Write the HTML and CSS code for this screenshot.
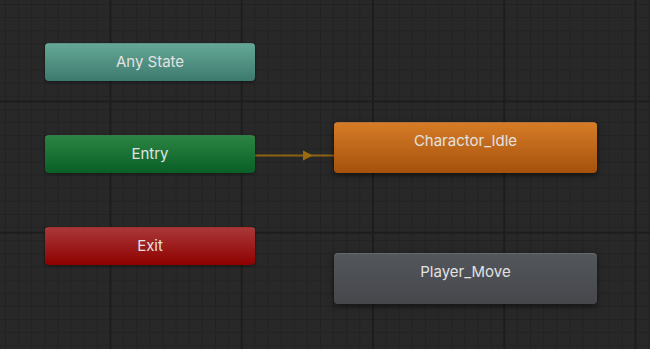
FILE: index.html
```html
<!DOCTYPE html>
<html lang="en">
<head>
    <meta charset="UTF-8">
    <title>Animator</title>
    <link rel="stylesheet" href="styles.css">
</head>
<body>
    <div class="graph">
        <!-- transitions -->
        <svg class="links" width="650" height="349" viewBox="0 0 650 349">
            <line x1="255" y1="155.5" x2="334" y2="155.5" stroke="#8e6212" stroke-width="2"/>
            <polygon points="303,150.5 313,155.5 303,160.5" fill="#9b6a12"/>
        </svg>

        <!-- states -->
        <div class="node node-any" style="left:45px; top:43px;">Any State</div>
        <div class="node node-entry" style="left:45px; top:135px;">Entry</div>
        <div class="node node-exit" style="left:45px; top:227px;">Exit</div>
        <div class="node node-state node-default" style="left:334px; top:122px;">Charactor_Idle</div>
        <div class="node node-state" style="left:334px; top:253px;">Player_Move</div>
    </div>
</body>
</html>
```

FILE: styles.css
```css
body {
    margin: 0;
    padding: 0;
    background-color: #282828;
    font-family: Inter, "Noto Sans", sans-serif;
    overflow: hidden;
}
.graph {
    position: relative;
    width: 650px;
    height: 349px;
    background-color: #282828;
    background-image:
        linear-gradient(to right, #1d1d1d 0 2px, transparent 2px),
        linear-gradient(to bottom, #1d1d1d 0 2px, transparent 2px),
        linear-gradient(to right, #222222 0 1px, transparent 1px),
        linear-gradient(to bottom, #222222 0 1px, transparent 1px);
    background-size: 131.25px 131.25px, 131.25px 131.25px, 13.125px 13.125px, 13.125px 13.125px;
    background-position: 109.5px 0, 0 100.5px, 5px 0, 0 4px;
}
.links {
    position: absolute;
    left: 0;
    top: 0;
}
.node {
    position: absolute;
    box-sizing: border-box;
    width: 210px;
    height: 38px;
    border-radius: 4px;
    color: #e2e2e2;
    font-size: 15px;
    text-align: center;
    line-height: 36px;
    box-shadow: 0 1px 3px rgba(0, 0, 0, 0.45);
    border-top: 1px solid rgba(255, 255, 255, 0.18);
}
.node-any {
    background: linear-gradient(to bottom, #64a795, #3d7a6e);
}
.node-entry {
    background: linear-gradient(to bottom, #2b8442, #095f26);
}
.node-exit {
    background: linear-gradient(to bottom, #aa3737, #8f0000);
}
.node-state {
    width: 263px;
    height: 51px;
    line-height: 35px;
    background: linear-gradient(to bottom, #53565b, #45474b);
    box-shadow: 0 2px 6px rgba(0, 0, 0, 0.55);
}
.node-default {
    background: linear-gradient(to bottom, #d67c27, #a5510c);
}
```
